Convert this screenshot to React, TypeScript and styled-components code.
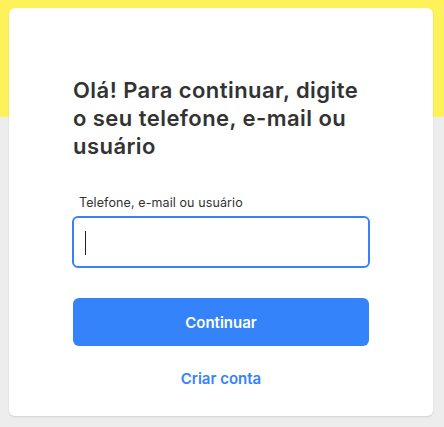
import React from "react";
import styled, { createGlobalStyle } from "styled-components";

const Global = createGlobalStyle`
  html, body { margin: 0; padding: 0; }
  body {
    background: #ededed;
    font-family: "Inter", "Liberation Sans", sans-serif;
    -webkit-font-smoothing: antialiased;
  }
`;

const Page = styled.div`
  width: 444px;
  height: 427px;
  background: linear-gradient(#fff159 0, #fff159 117px, #ededed 117px);
  padding: 8px 11px 0 9px;
  box-sizing: border-box;
`;

const Card = styled.main`
  background: #fff;
  border-radius: 6px;
  box-shadow: 0 1px 2px rgba(0, 0, 0, 0.12);
  height: 408px;
  box-sizing: border-box;
  padding: 68px 64px 0 64px;
  display: flex;
  flex-direction: column;
`;

const Title = styled.h1`
  margin: 0;
  font-size: 22px;
  line-height: 28px;
  font-weight: 600;
  color: #333;
  letter-spacing: 0.45px;
`;

const Field = styled.label`
  display: flex;
  flex-direction: column;
  margin-top: 35px;
`;

const Label = styled.span`
  font-size: 12.5px;
  line-height: 16px;
  color: #333;
  padding-left: 6px;
  margin-bottom: 5px;
  letter-spacing: 0.1px;
`;

const InputWrap = styled.div`
  position: relative;
  margin-left: -1px;
  width: 298px;
`;

const Input = styled.input`
  box-sizing: border-box;
  display: block;
  height: 52px;
  width: 100%;
  border: 2px solid #3483fa;
  border-radius: 6px;
  padding: 0 12px;
  font-size: 16px;
  font-family: inherit;
  outline: none;
  caret-color: transparent;
`;

const Caret = styled.span`
  position: absolute;
  left: 13px;
  top: 15px;
  width: 1px;
  height: 24px;
  background: #222;
  pointer-events: none;
`;

const Primary = styled.button`
  margin-top: 30px;
  height: 48px;
  width: 296px;
  border: none;
  border-radius: 6px;
  background: #3483fa;
  color: #fff;
  font-family: inherit;
  font-size: 15px;
  font-weight: 600;
`;

const Link = styled.a`
  margin-top: 23px;
  align-self: center;
  color: #3483fa;
  font-size: 15px;
  font-weight: 600;
  text-decoration: none;
`;

export default function App() {
  return (
    <>
      <Global />
      <Page>
        <Card>
          <Title>Olá! Para continuar, digite o seu telefone, e-mail ou usuário</Title>
          <Field>
            <Label>Telefone, e-mail ou usuário</Label>
            <InputWrap>
              <Input autoFocus />
              <Caret />
            </InputWrap>
          </Field>
          <Primary>Continuar</Primary>
          <Link href="#">Criar conta</Link>
        </Card>
      </Page>
    </>
  );
}
